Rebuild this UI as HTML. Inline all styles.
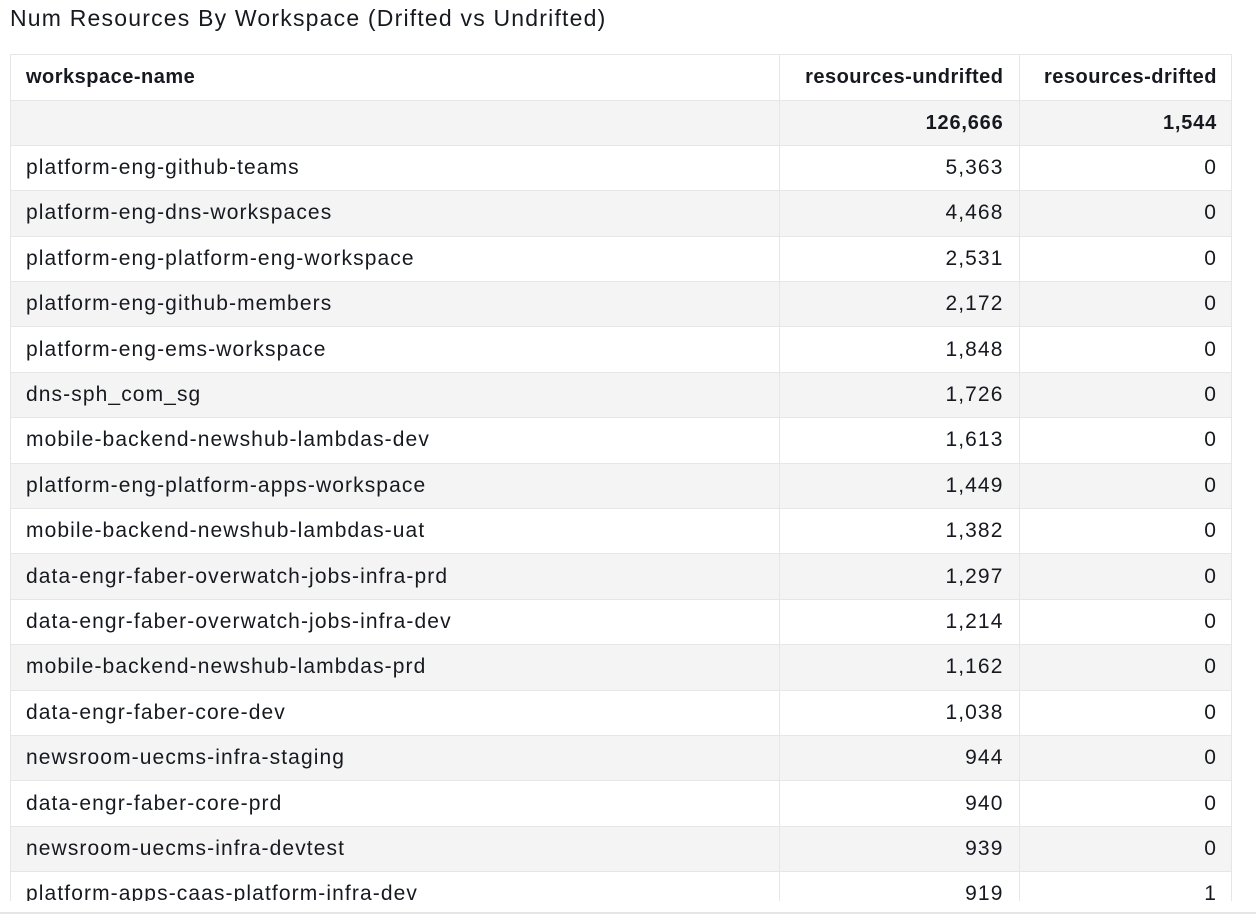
<!DOCTYPE html><html><head><style>
body{margin:0;background:#fff;font-family:"Liberation Sans",sans-serif;color:#16191f;width:1256px;height:916px;overflow:hidden;position:relative}
.t{position:absolute;left:10px;top:3px;font-size:23px;line-height:30px;letter-spacing:1.2px}
.w{position:absolute;left:10px;top:54px;width:1222px;height:847px;overflow:hidden;border-left:1px solid #e6e6e6;border-top:1px solid #e6e6e6;border-right:1px solid #e6e6e6;box-sizing:border-box}
table{border-collapse:collapse;width:1221px;font-size:21px;letter-spacing:1.1px}
td{height:45.4px;box-sizing:border-box;border-bottom:1px solid #e6e6e6;padding:0 15px;white-space:nowrap;line-height:20px}
td+td{border-left:1px solid #e6e6e6;text-align:right}
tr:nth-child(even) td{background:#f4f4f4}
tr:first-child td{background:#fff;font-weight:bold;font-size:20px;letter-spacing:0.5px;height:45px}
tr:nth-child(2) td{font-weight:bold;font-size:20px;letter-spacing:0.8px}
.c1{width:768px}.c2{width:240px}
.line{position:absolute;left:0;top:912px;width:1256px;height:2px;background:#e6e6e6}
</style></head><body>
<div class="t">Num Resources By Workspace (Drifted vs Undrifted)</div>
<div class="w"><table>
<tr><td class="c1">workspace-name</td><td class="c2">resources-undrifted</td><td>resources-drifted</td></tr>
<tr><td></td><td>126,666</td><td>1,544</td></tr>
<tr><td>platform-eng-github-teams</td><td>5,363</td><td>0</td></tr>
<tr><td>platform-eng-dns-workspaces</td><td>4,468</td><td>0</td></tr>
<tr><td>platform-eng-platform-eng-workspace</td><td>2,531</td><td>0</td></tr>
<tr><td>platform-eng-github-members</td><td>2,172</td><td>0</td></tr>
<tr><td>platform-eng-ems-workspace</td><td>1,848</td><td>0</td></tr>
<tr><td>dns-sph_com_sg</td><td>1,726</td><td>0</td></tr>
<tr><td>mobile-backend-newshub-lambdas-dev</td><td>1,613</td><td>0</td></tr>
<tr><td>platform-eng-platform-apps-workspace</td><td>1,449</td><td>0</td></tr>
<tr><td>mobile-backend-newshub-lambdas-uat</td><td>1,382</td><td>0</td></tr>
<tr><td>data-engr-faber-overwatch-jobs-infra-prd</td><td>1,297</td><td>0</td></tr>
<tr><td>data-engr-faber-overwatch-jobs-infra-dev</td><td>1,214</td><td>0</td></tr>
<tr><td>mobile-backend-newshub-lambdas-prd</td><td>1,162</td><td>0</td></tr>
<tr><td>data-engr-faber-core-dev</td><td>1,038</td><td>0</td></tr>
<tr><td>newsroom-uecms-infra-staging</td><td>944</td><td>0</td></tr>
<tr><td>data-engr-faber-core-prd</td><td>940</td><td>0</td></tr>
<tr><td>newsroom-uecms-infra-devtest</td><td>939</td><td>0</td></tr>
<tr><td>platform-apps-caas-platform-infra-dev</td><td>919</td><td>1</td></tr>
</table></div>
<div class="line"></div>
</body></html>
